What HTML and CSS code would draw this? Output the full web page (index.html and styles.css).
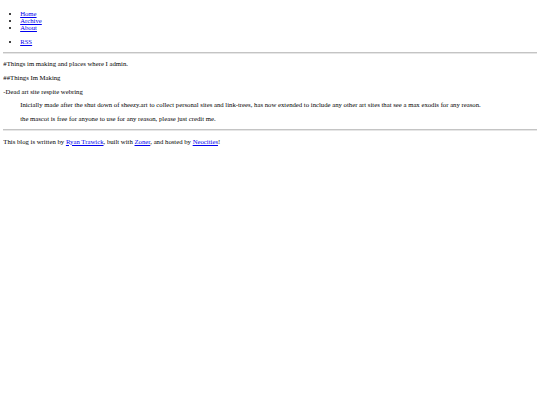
FILE: index.html
```html
<!doctype html>
<html>
  <head>
    <title>Things im making</title>
    <meta name="viewport" content="width=device-width, initial-scale=1.0" />
    <link rel="stylesheet" href="styles.css">
  </head>
  <body class="page">
    <nav>
      <ul class="nav-list">
        <li><a href="/">Home</a></li>
        <li><a href="/archive">Archive</a></li>
        <li><a href="/about">About</a></li>
      </ul>
      <ul class="nav-list">
        <li><a href="/rss.xml">RSS</a></li>
      </ul>
    </nav>
    <hr class="rule" />

    <main>
      <p class="para">#Things im making and places where I admin.</p>
      <p class="para">##Things Im Making</p>
      <p class="para">-Dead art site respite webring</p>
      <blockquote class="quote">
        <p class="para">Inicially made after the shut down of sheezy.art to collect personal sites and link-trees, has now extended to include any other art sites that see a max exodis for any reason.</p>
        <p class="para">the mascot is free for anyone to use for any reason, please just credit me.</p>
      </blockquote>
    </main>

    <hr class="rule" />
    <footer>
      <p class="para">This blog is written by <a href="#">Ryan Trawick</a>, built with <a href="#">Zoner</a>, and hosted by <a href="#">Neocities</a>!</p>
    </footer>
  </body>
</html>
```

FILE: styles.css
```css
.page {
  font-family: 'Liberation Serif', 'Times New Roman', serif;
  font-size: 6.72px;
  margin: 3.36px;
  background-color: #fff;
  color: #000;
}

a {
  color: #0000ee;
}

.nav-list {
  margin: 6.72px 0;
  padding-left: 16.8px;
}

.rule {
  margin: 3.36px 0;
  border: none;
  border-top: 1px solid #c4c4c4;
  border-bottom: 1px solid #e6e6e6;
  height: 0;
}

.para {
  margin: 6.72px 0;
}

.quote {
  margin: 6.72px 16.8px;
}
```
